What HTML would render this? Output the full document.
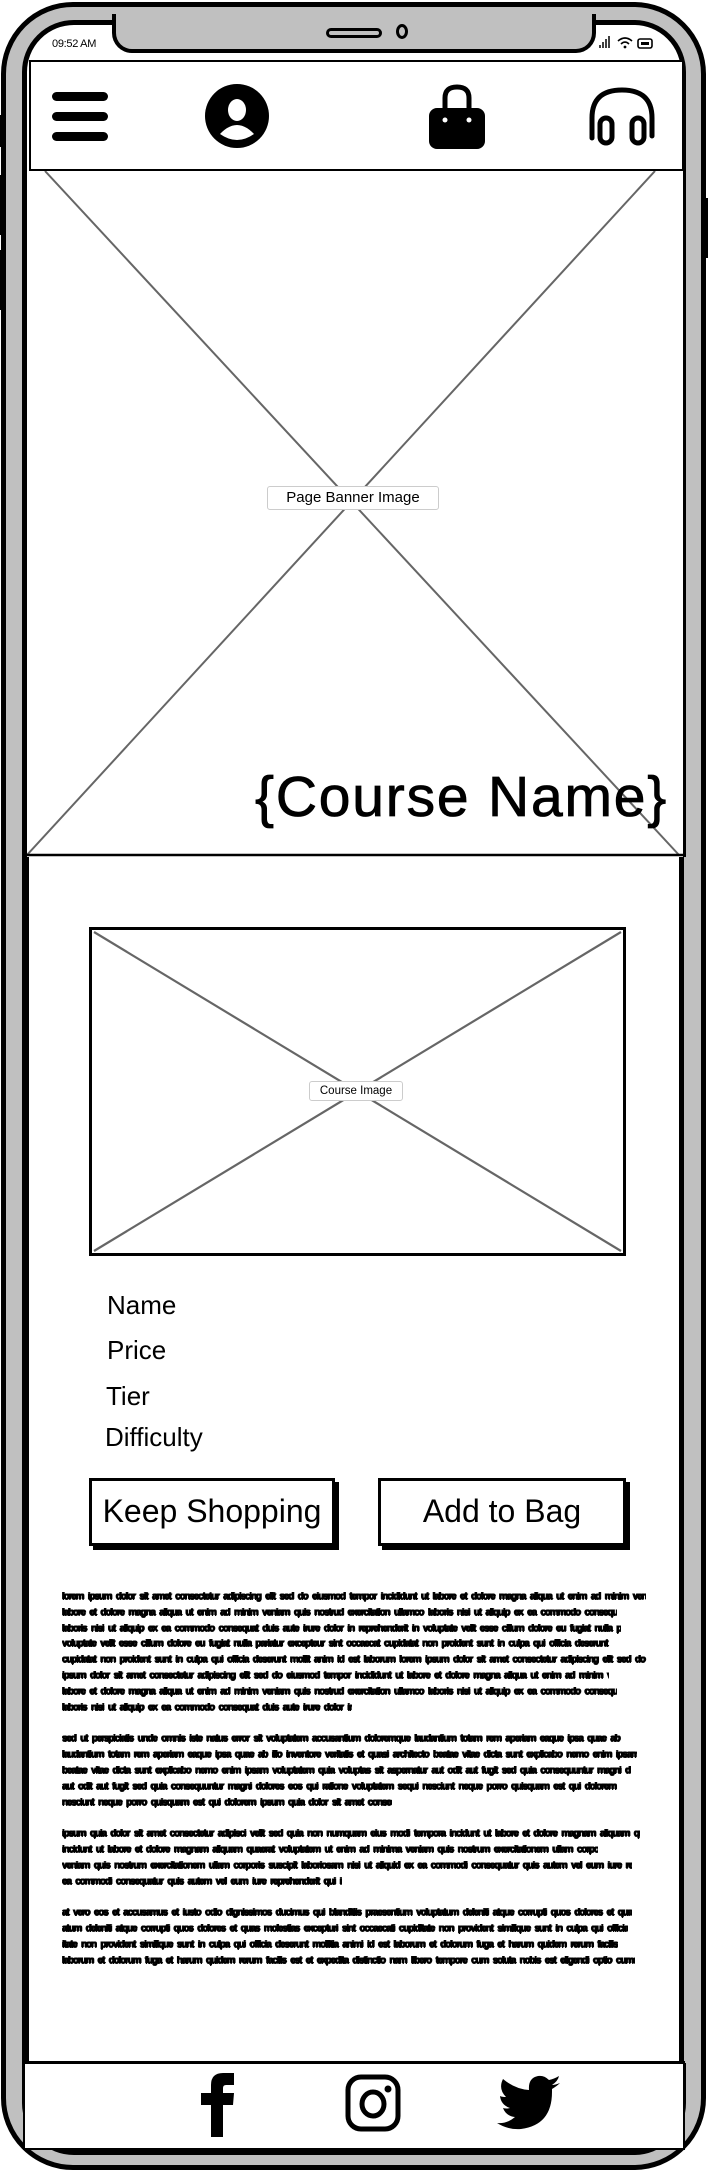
<!DOCTYPE html>
<html><head><meta charset="utf-8"><style>
*{margin:0;padding:0;box-sizing:border-box}
body{width:708px;height:2172px;background:#fff;position:relative;overflow:hidden;font-family:"Liberation Sans",sans-serif}
.abs{position:absolute}
#phone{left:1px;top:2px;width:705px;height:2168px;border:5px solid #000;border-radius:72px;background:#c0c0c0}
#screen{left:22px;top:20px;width:664px;height:2135px;border:5px solid #000;border-radius:52px;background:#fff;overflow:hidden}
#notch{left:112px;top:14px;width:484px;height:39px;background:#c0c0c0;border:4px solid #000;border-top:none;border-radius:0 0 20px 20px}
.sc{font-size:26px;color:#000}
.lines div{position:absolute;left:62px;height:10px;font:bold 10px/10px "Liberation Sans",sans-serif;letter-spacing:-1.2px;word-spacing:3px;white-space:nowrap;overflow:hidden;color:#000;text-shadow:0.6px 0 0 #000,-0.6px 0 0 #000,0 0.8px 0 #000}
.btn{position:absolute;top:1478px;height:68px;border:3px solid #000;box-shadow:4px 4px 0 #000;background:#fff;font-size:32px;text-align:center;line-height:60px}
</style></head><body>
<div id="phone" class="abs"></div>
<div class="abs" style="left:0;top:115px;width:4px;height:32px;background:#000"></div>
<div class="abs" style="left:0;top:175px;width:4px;height:60px;background:#000"></div>
<div class="abs" style="left:0;top:250px;width:4px;height:60px;background:#000"></div>
<div class="abs" style="left:704px;top:198px;width:4px;height:60px;background:#000"></div>
<div id="screen" class="abs"></div>
<div id="notch" class="abs"></div>
<div class="abs" style="left:326px;top:28px;width:56px;height:10px;border:3px solid #000;border-radius:6px;background:#c0c0c0"></div>
<div class="abs" style="left:396px;top:24px;width:12px;height:15px;border:3px solid #000;border-radius:50%;background:#c0c0c0"></div>
<div class="abs" style="left:52px;top:38px;font-size:11px;letter-spacing:-0.3px">09:52 AM</div>
<svg class="abs" style="left:598px;top:34px" width="60" height="20" viewBox="0 0 60 20">
<g stroke="#000" stroke-width="1.5"><line x1="2" y1="14" x2="2" y2="11"/><line x1="5" y1="14" x2="5" y2="8"/><line x1="8" y1="14" x2="8" y2="5"/><line x1="11" y1="14" x2="11" y2="2"/></g>
<path d="M20 7 Q27 1 34 7 M23 10 Q27 6 31 10" fill="none" stroke="#000" stroke-width="1.6"/><circle cx="27" cy="13" r="1.4"/>
<rect x="40" y="5" width="14" height="9" rx="2" fill="none" stroke="#000" stroke-width="1.6"/><rect x="43" y="8" width="8" height="3"/>
</svg>
<div class="abs" style="left:29px;top:60px;width:655px;height:111px;border:2px solid #000;background:#fff"></div>
<div class="abs" style="left:52px;top:92px;width:56px;height:9px;border-radius:5px;background:#000"></div>
<div class="abs" style="left:52px;top:112px;width:56px;height:9px;border-radius:5px;background:#000"></div>
<div class="abs" style="left:52px;top:132px;width:56px;height:9px;border-radius:5px;background:#000"></div>
<svg class="abs" style="left:205px;top:84px" width="64" height="64" viewBox="0 0 64 64">
<ellipse cx="32" cy="32" rx="32" ry="32"/><ellipse cx="32" cy="26" rx="9" ry="11" fill="#fff"/><path d="M15 50 Q32 32 49 50 Q32 62 15 50Z" fill="#fff"/></svg>
<svg class="abs" style="left:428px;top:82px" width="58" height="68" viewBox="0 0 58 68">
<path d="M17 28 V16 Q17 5 29 5 Q41 5 41 16 V28" fill="none" stroke="#000" stroke-width="5"/>
<rect x="1" y="26" width="56" height="41" rx="8"/><circle cx="17" cy="38" r="2.5" fill="#fff"/><circle cx="41" cy="38" r="2.5" fill="#fff"/></svg>
<svg class="abs" style="left:588px;top:86px" width="68" height="60" viewBox="0 0 68 60">
<path d="M4 52 V32 Q4 4 34 4 Q64 4 64 32 V50" fill="none" stroke="#000" stroke-width="5" stroke-linecap="round"/>
<rect x="12" y="32" width="12" height="25" rx="6" fill="none" stroke="#000" stroke-width="5"/><rect x="44" y="32" width="12" height="25" rx="6" fill="none" stroke="#000" stroke-width="5"/></svg>
<svg class="abs" style="left:27px;top:171px" width="656" height="686" viewBox="0 0 656 686">
<rect width="656" height="686" fill="#fff"/>
<line x1="18" y1="0" x2="652" y2="684" stroke="#666" stroke-width="2"/><line x1="628" y1="0" x2="0" y2="684" stroke="#666" stroke-width="2"/>
<line x1="0" y1="684" x2="656" y2="684" stroke="#000" stroke-width="2.5"/></svg>
<div class="abs" style="left:267px;top:486px;width:172px;height:24px;border:1px solid #ccc;border-radius:3px;background:#fff;font-size:15px;line-height:22px;text-align:center">Page Banner Image</div>
<div class="abs" style="left:255px;top:765px;font-size:57px;line-height:64px;letter-spacing:1.8px;white-space:nowrap;-webkit-text-stroke:0.8px #000">{Course Name}</div>
<div class="abs" style="left:25px;top:857px;width:4px;height:1206px;background:#000"></div>
<div class="abs" style="left:679px;top:857px;width:5px;height:1206px;background:#000"></div>
<div class="abs" style="left:684px;top:857px;width:2px;height:1206px;background:#c0c0c0"></div>
<svg class="abs" style="left:89px;top:927px" width="537" height="329" viewBox="0 0 537 329">
<rect x="1.5" y="1.5" width="534" height="326" fill="#fff" stroke="#000" stroke-width="3"/>
<line x1="5" y1="5" x2="532" y2="324" stroke="#666" stroke-width="2.2"/><line x1="532" y1="5" x2="5" y2="324" stroke="#666" stroke-width="2.2"/></svg>
<div class="abs" style="left:309px;top:1081px;width:94px;height:20px;border:1px solid #ccc;border-radius:3px;background:#fff;font-size:11.5px;line-height:18px;text-align:center">Course Image</div>
<div class="abs sc" style="left:107px;top:1290px">Name</div>
<div class="abs sc" style="left:107px;top:1335px">Price</div>
<div class="abs sc" style="left:106px;top:1381px">Tier</div>
<div class="abs sc" style="left:105px;top:1422px">Difficulty</div>
<div class="btn" style="left:89px;width:246px">Keep Shopping</div>
<div class="btn" style="left:378px;width:248px">Add to Bag</div>
<div class="lines">
<div style="top:1592px;width:584px">lorem ipsum dolor sit amet consectetur adipiscing elit sed do eiusmod tempor incididunt ut labore et dolore magna aliqua ut enim ad minim veniam quis nostrud exercitation</div>
<div style="top:1608px;width:555px">labore et dolore magna aliqua ut enim ad minim veniam quis nostrud exercitation ullamco laboris nisi ut aliquip ex ea commodo consequat duis aute irure</div>
<div style="top:1624px;width:559px">laboris nisi ut aliquip ex ea commodo consequat duis aute irure dolor in reprehenderit in voluptate velit esse cillum dolore eu fugiat nulla pariatur</div>
<div style="top:1639px;width:549px">voluptate velit esse cillum dolore eu fugiat nulla pariatur excepteur sint occaecat cupidatat non proident sunt in culpa qui officia deserunt mollit</div>
<div style="top:1655px;width:590px">cupidatat non proident sunt in culpa qui officia deserunt mollit anim id est laborum lorem ipsum dolor sit amet consectetur adipiscing elit sed do</div>
<div style="top:1671px;width:547px">ipsum dolor sit amet consectetur adipiscing elit sed do eiusmod tempor incididunt ut labore et dolore magna aliqua ut enim ad minim veniam quis</div>
<div style="top:1687px;width:555px">labore et dolore magna aliqua ut enim ad minim veniam quis nostrud exercitation ullamco laboris nisi ut aliquip ex ea commodo consequat duis aute</div>
<div style="top:1703px;width:290px">laboris nisi ut aliquip ex ea commodo consequat duis aute irure dolor in reprehenderit</div>
<div style="top:1734px;width:561px">sed ut perspiciatis unde omnis iste natus error sit voluptatem accusantium doloremque laudantium totam rem aperiam eaque ipsa quae ab illo inventore</div>
<div style="top:1750px;width:575px">laudantium totam rem aperiam eaque ipsa quae ab illo inventore veritatis et quasi architecto beatae vitae dicta sunt explicabo nemo enim ipsam</div>
<div style="top:1766px;width:569px">beatae vitae dicta sunt explicabo nemo enim ipsam voluptatem quia voluptas sit aspernatur aut odit aut fugit sed quia consequuntur magni dolores</div>
<div style="top:1782px;width:556px">aut odit aut fugit sed quia consequuntur magni dolores eos qui ratione voluptatem sequi nesciunt neque porro quisquam est qui dolorem ipsum quia</div>
<div style="top:1798px;width:330px">nesciunt neque porro quisquam est qui dolorem ipsum quia dolor sit amet consectetur adipisci velit</div>
<div style="top:1829px;width:578px">ipsum quia dolor sit amet consectetur adipisci velit sed quia non numquam eius modi tempora incidunt ut labore et dolore magnam aliquam quaerat voluptatem</div>
<div style="top:1845px;width:536px">incidunt ut labore et dolore magnam aliquam quaerat voluptatem ut enim ad minima veniam quis nostrum exercitationem ullam corporis suscipit</div>
<div style="top:1861px;width:570px">veniam quis nostrum exercitationem ullam corporis suscipit laboriosam nisi ut aliquid ex ea commodi consequatur quis autem vel eum iure reprehenderit</div>
<div style="top:1877px;width:280px">ea commodi consequatur quis autem vel eum iure reprehenderit qui in ea voluptate velit esse</div>
<div style="top:1908px;width:570px">at vero eos et accusamus et iusto odio dignissimos ducimus qui blanditiis praesentium voluptatum deleniti atque corrupti quos dolores et quas molestias</div>
<div style="top:1924px;width:566px">atum deleniti atque corrupti quos dolores et quas molestias excepturi sint occaecati cupiditate non provident similique sunt in culpa qui officia</div>
<div style="top:1940px;width:556px">itate non provident similique sunt in culpa qui officia deserunt mollitia animi id est laborum et dolorum fuga et harum quidem rerum facilis est</div>
<div style="top:1956px;width:573px">laborum et dolorum fuga et harum quidem rerum facilis est et expedita distinctio nam libero tempore cum soluta nobis est eligendi optio cumque nihil</div>
</div>
<div class="abs" style="left:23px;top:2061px;width:662px;height:89px;border:2px solid #000;border-top:3px solid #000;background:#fff"></div>
<svg class="abs" style="left:199px;top:2071px" width="38" height="66" viewBox="0 0 38 66">
<path d="M12 66 V34 H2 V22 H12 V14 Q12 2 24 2 H35 V14 H27 Q24 14 24 17 V22 H35 L34 34 H24 V66Z"/></svg>
<svg class="abs" style="left:345px;top:2074px" width="56" height="58" viewBox="0 0 56 58">
<rect x="3" y="3" width="50" height="52" rx="13" fill="none" stroke="#000" stroke-width="5"/>
<ellipse cx="28" cy="30" rx="11" ry="12" fill="none" stroke="#000" stroke-width="5"/><circle cx="43" cy="15" r="3.5"/></svg>
<svg class="abs" style="left:496px;top:2075px" width="66" height="56" viewBox="0 0 66 56">
<path d="M64 8 Q59 10 56 10 Q62 6 63 1 Q58 4 53 5 Q48 0 42 1 Q32 3 33 15 Q19 14 7 4 Q2 14 10 22 Q6 22 4 21 Q5 30 14 33 Q10 34 7 33 Q10 41 19 42 Q11 49 1 48 Q12 55 25 54 Q56 50 56 17 Q56 15 56 14 Q61 11 64 8Z"/></svg>
</body></html>
